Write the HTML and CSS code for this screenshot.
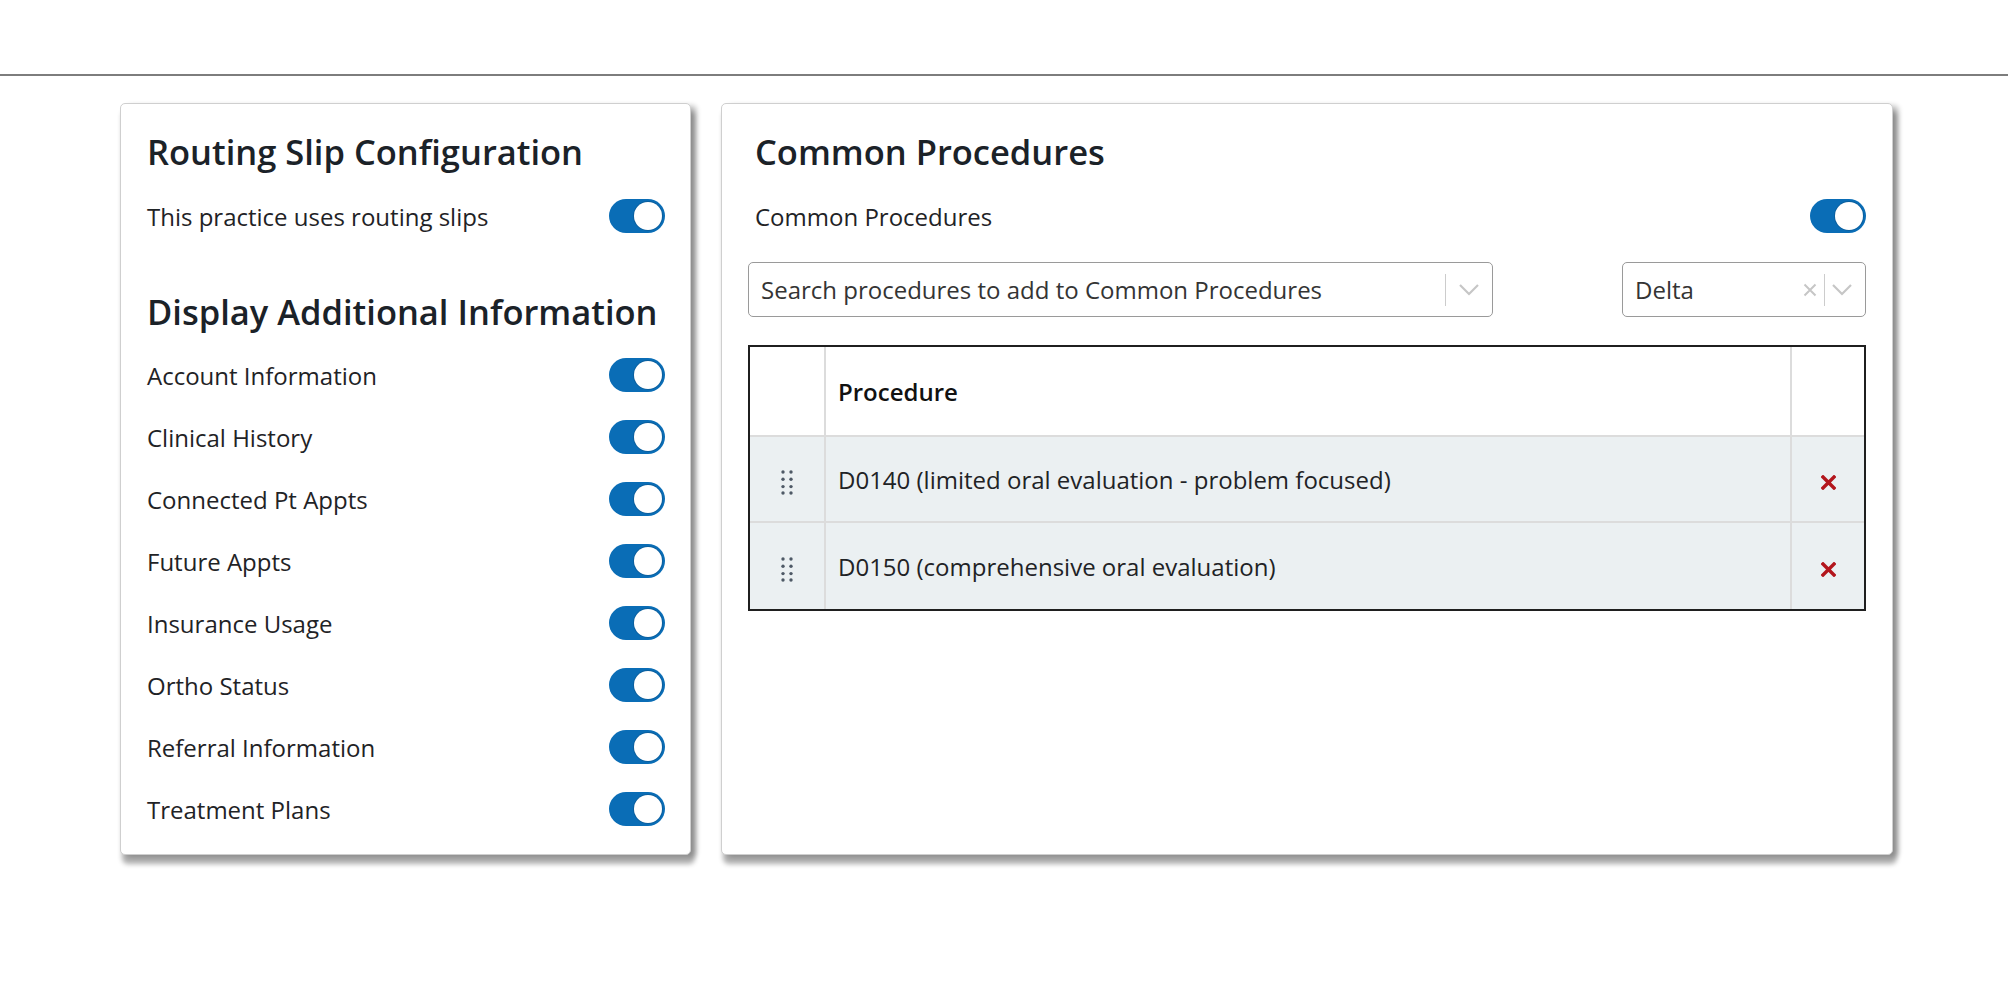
FILE: index.html
```html
<!DOCTYPE html>
<html lang="en">
<head>
<meta charset="utf-8">
<title>Routing Slip Configuration</title>
<link rel="stylesheet" href="styles.css">
</head>
<body>
<div class="topbar"></div>
<main class="main">
  <section class="card card-left">
    <h2 class="card-title">Routing Slip Configuration</h2>
    <div class="toggle-row first-row">
      <span class="label">This practice uses routing slips</span>
      <span class="toggle"><span class="knob"></span></span>
    </div>
    <h2 class="card-title second-title">Display Additional Information</h2>
    <div class="toggle-list">
      <div class="toggle-row"><span class="label">Account Information</span><span class="toggle"><span class="knob"></span></span></div>
      <div class="toggle-row"><span class="label">Clinical History</span><span class="toggle"><span class="knob"></span></span></div>
      <div class="toggle-row"><span class="label">Connected Pt Appts</span><span class="toggle"><span class="knob"></span></span></div>
      <div class="toggle-row"><span class="label">Future Appts</span><span class="toggle"><span class="knob"></span></span></div>
      <div class="toggle-row"><span class="label">Insurance Usage</span><span class="toggle"><span class="knob"></span></span></div>
      <div class="toggle-row"><span class="label">Ortho Status</span><span class="toggle"><span class="knob"></span></span></div>
      <div class="toggle-row"><span class="label">Referral Information</span><span class="toggle"><span class="knob"></span></span></div>
      <div class="toggle-row"><span class="label">Treatment Plans</span><span class="toggle"><span class="knob"></span></span></div>
    </div>
  </section>

  <section class="card card-right">
    <h2 class="card-title indent">Common Procedures</h2>
    <div class="toggle-row first-row indent">
      <span class="label">Common Procedures</span>
      <span class="toggle"><span class="knob"></span></span>
    </div>
    <div class="select-row">
      <div class="select select-search">
        <span class="select-text">Search procedures to add to Common Procedures</span>
        <span class="indicators">
          <span class="sep"></span>
          <svg class="chev" width="22" height="14" viewBox="0 0 22 14"><path d="M2 2 L11 11 L20 2" fill="none" stroke="#c6c6c6" stroke-width="2.2"/></svg>
        </span>
      </div>
      <div class="select select-delta">
        <span class="select-text">Delta</span>
        <span class="indicators">
          <svg class="clear" width="14" height="14" viewBox="0 0 14 14"><path d="M1.5 1.5 L12.5 12.5 M12.5 1.5 L1.5 12.5" fill="none" stroke="#c6c6c6" stroke-width="2"/></svg>
          <span class="sep"></span>
          <svg class="chev" width="22" height="14" viewBox="0 0 22 14"><path d="M2 2 L11 11 L20 2" fill="none" stroke="#c6c6c6" stroke-width="2.2"/></svg>
        </span>
      </div>
    </div>
    <table class="proc-table">
      <thead>
        <tr>
          <th class="col-drag"></th>
          <th class="col-name">Procedure</th>
          <th class="col-del"></th>
        </tr>
      </thead>
      <tbody>
        <tr>
          <td class="col-drag">
            <svg width="12" height="25" viewBox="0 0 12 25" class="dots"><g fill="#4e5966"><circle cx="2" cy="2" r="1.7"/><circle cx="10" cy="2" r="1.7"/><circle cx="2" cy="9.3" r="1.7"/><circle cx="10" cy="9.3" r="1.7"/><circle cx="2" cy="16.6" r="1.7"/><circle cx="10" cy="16.6" r="1.7"/><circle cx="2" cy="23" r="1.7"/><circle cx="10" cy="23" r="1.7"/></g></svg>
          </td>
          <td class="col-name">D0140 (limited oral evaluation - problem focused)</td>
          <td class="col-del"><svg width="15" height="15" viewBox="0 0 15 15"><path d="M2 2 L13 13 M13 2 L2 13" fill="none" stroke="#b3161d" stroke-width="3.4" stroke-linecap="square"/></svg></td>
        </tr>
        <tr>
          <td class="col-drag">
            <svg width="12" height="25" viewBox="0 0 12 25" class="dots"><g fill="#4e5966"><circle cx="2" cy="2" r="1.7"/><circle cx="10" cy="2" r="1.7"/><circle cx="2" cy="9.3" r="1.7"/><circle cx="10" cy="9.3" r="1.7"/><circle cx="2" cy="16.6" r="1.7"/><circle cx="10" cy="16.6" r="1.7"/><circle cx="2" cy="23" r="1.7"/><circle cx="10" cy="23" r="1.7"/></g></svg>
          </td>
          <td class="col-name">D0150 (comprehensive oral evaluation)</td>
          <td class="col-del"><svg width="15" height="15" viewBox="0 0 15 15"><path d="M2 2 L13 13 M13 2 L2 13" fill="none" stroke="#b3161d" stroke-width="3.4" stroke-linecap="square"/></svg></td>
        </tr>
      </tbody>
    </table>
  </section>
</main>
</body>
</html>
```

FILE: styles.css
```css
* { box-sizing: border-box; }

body {
  margin: 0;
  background: #ffffff;
  font-family: "Open Sans", "Noto Sans", sans-serif;
  color: #1e2226;
}

.topbar {
  height: 76px;
  border-bottom: 2px solid #7d7d7d;
}

.main {
  display: flex;
  align-items: stretch;
  gap: 30px;
  padding: 27px 115px 40px 120px;
}

.card {
  background: #fff;
  border: 1px solid #cfcfcf;
  border-radius: 5px;
  box-shadow: 3px 8px 5px 1px rgba(0, 0, 0, 0.32), 6px 2px 5px rgba(0, 0, 0, 0.2);
}

.card-left {
  width: 571px;
  flex: none;
  padding: 28px 25px 28px 26px;
}

.card-right {
  flex: 1;
  padding: 28px 26px 28px 26px;
}

.card-title {
  margin: 0;
  font-size: 34.5px;
  line-height: 40px;
  font-weight: 600;
  color: #1b2228;
  white-space: nowrap;
}

.second-title {
  margin-top: 59px;
}

.indent {
  padding-left: 7px;
}

.toggle-row {
  display: flex;
  align-items: center;
  justify-content: space-between;
  height: 34px;
}

.first-row {
  margin-top: 27px;
}

.toggle-list {
  display: flex;
  flex-direction: column;
  gap: 28px;
  margin-top: 26px;
}

.label {
  font-size: 24px;
  color: #1f2326;
  white-space: nowrap;
}

.toggle {
  position: relative;
  width: 56px;
  height: 34px;
  border-radius: 17px;
  background: #0a6db6;
  flex: none;
}

.knob {
  position: absolute;
  right: 3px;
  top: 3px;
  width: 28px;
  height: 28px;
  border-radius: 50%;
  background: #fff;
  box-shadow: 0 0 0 1px #0b5f9e;
}

.select-row {
  display: flex;
  justify-content: space-between;
  margin-top: 29px;
}

.select {
  height: 55px;
  border: 1px solid #9a9a9a;
  border-radius: 5px;
  display: flex;
  align-items: center;
  justify-content: space-between;
  padding: 0 12px 0 12px;
  background: #fff;
}

.select-search { width: 745px; }
.select-delta { width: 244px; }

.select-text {
  font-size: 24px;
  color: #343434;
  white-space: nowrap;
}

.indicators {
  display: flex;
  align-items: center;
}

.sep {
  width: 1px;
  height: 32px;
  background: #cccccc;
  margin: 0 12px 0 0;
}

.clear {
  margin-right: 7px;
}

.select-delta .sep {
  margin-right: 6px;
}

.chev { display: block; }

.proc-table {
  width: 100%;
  margin-top: 28px;
  border: 2px solid #1f1f1f;
  border-collapse: separate;
  border-spacing: 0;
  font-size: 24px;
}

.proc-table th,
.proc-table td {
  padding: 0;
  border-bottom: 2px solid #dcdcdc;
}

.proc-table tbody tr:last-child td {
  border-bottom: none;
}

.proc-table th {
  height: 90px;
  background: #fff;
  text-align: left;
  font-weight: 600;
  color: #111;
}

.proc-table td {
  height: 86px;
  background: #ebf0f2;
  color: #1f2326;
}

.col-drag {
  width: 76px;
  border-right: 2px solid #dcdcdc;
  text-align: center;
}

.col-name {
  padding-left: 12px !important;
}

.col-del {
  width: 74px;
  border-left: 2px solid #dcdcdc;
  text-align: center;
}

.col-drag svg,
.col-del svg {
  display: inline-block;
  vertical-align: middle;
}
```
